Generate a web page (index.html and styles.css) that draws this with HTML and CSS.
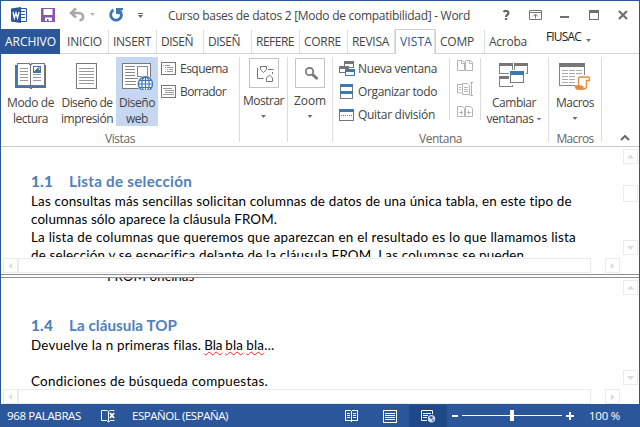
FILE: index.html
```html
<!DOCTYPE html>
<html lang="es">
<head>
<meta charset="utf-8">
<title>Curso bases de datos 2 - Word</title>
<link rel="stylesheet" href="styles.css">
</head>
<body>
<div class="window">
  <header class="titlebar">
    <svg class="quick" width="150" height="28" viewBox="1 1 150 28">
      <path fill="#2b579a" d="M11 8.500L21 7v16l-10-1.500z"/>
      <path fill="none" stroke="#2b579a" d="M21 8.500h5.500v13H21M21 11.500h4M21 14.500h4M21 17.500h4"/>
      <path fill="none" stroke="#fff" stroke-width="1.300" d="M13 12l1.300 6 1.700-5 1.500 5 1.500-6"/>
      <path fill="#8558ab" fill-rule="evenodd" d="M41 8h14v14H41zM43.500 9v6h9V9zM45 17.500V21h2v-2h1.500v2H52v-3.500z"/>
      <path fill="none" stroke="#a9a9a9" stroke-width="2.600" d="M76 8.500l-5 4.500 5 4.500M72 13h6c6.500 0 6.500 6.500 1.500 7.500"/>
      <path fill="#b5b5b5" d="M90 13h5l-2.500 3z"/>
      <path fill="none" stroke="#3e76b4" stroke-width="2.800" d="M113.500 10a5.400 5.400 0 1 0 6.500 1"/>
      <path fill="#3e76b4" d="M116 8h7v2.200h-2.500l-.8 4.300-3.700-.7z"/>
      <path stroke="#666" d="M138 13.500h5"/><path fill="#666" d="M138 15h5l-2.500 3z"/>
    </svg>
    <span class="doc-title"><span data-fit="302">Curso bases de datos 2 [Modo de compatibilidad] - Word</span></span>
    <svg class="controls" width="139" height="28" viewBox="500 1 139 28">
      <path fill="none" stroke="#666" stroke-width="2.200" d="M504.500 12c1-1.500 5-1.500 5 1 0 2-2.500 1.500-2.500 4M507 18v2"/>
      <path fill="none" stroke="#777" d="M530.500 10.500h12v9h-12zM530 12.500h13M536.500 18.500v-4M534 16.500l2.500-2.500 2.500 2.500"/>
      <path fill="#707070" d="M561 16h9v2h-9z"/>
      <path fill="#707070" fill-rule="evenodd" d="M590 10h10v10h-10zM591 13v6h8v-6z"/>
      <path stroke="#707070" stroke-width="2.200" d="M620 11l8 8M628 11l-8 8"/>
    </svg>
  </header>

  <nav class="tabs">
    <span class="tab file"><span data-fit="51">ARCHIVO</span></span>
    <span class="tab"><span data-fit="35">INICIO</span></span>
    <span class="tab"><span data-fit="38">INSERT</span></span>
    <span class="tab"><span data-fit="32">DISEÑ</span></span>
    <span class="tab"><span data-fit="32">DISEÑ</span></span>
    <span class="tab"><span data-fit="38">REFERE</span></span>
    <span class="tab"><span data-fit="37">CORRE</span></span>
    <span class="tab"><span data-fit="37">REVISA</span></span>
    <span class="tab active"><span data-fit="32">VISTA</span></span>
    <span class="tab"><span data-fit="34">COMP</span></span>
    <span class="tab last"><span data-fit="38">Acroba</span></span>
    <span class="account"><span data-fit="35">FIUSAC</span><i class="arrow"></i></span>
  </nav>

  <section class="ribbon">
    <div class="group vistas">
      <div class="row">
        <div class="big modo">
          <svg width="32" height="28" viewBox="0 0 32 28" shape-rendering="crispEdges">
            <path fill="#3e78b3" d="M0 3h3v20h11l2 1 2-1h11V3h2v23H18l-2 1-2-1H0z"/>
            <path fill="#fff" stroke="#777" d="M2.500 1.500h11l2 1 2-1h12v22h-12l-2 1-2-1h-11zM15.500 2v22"/>
            <path stroke="#999" d="M5 6.500h8M5 9.500h8M5 12.500h8M5 15.500h8M5 18.500h8M18 12.500h8M18 15.500h8M18 18.500h8"/>
            <path fill="#3e78b3" d="M18 4h8v7h-8z"/><path fill="#fff" d="M19 5h6v2l-1 1-2-2-3 3z"/><path fill="#e7a13b" d="M23 5h2v2h-2z"/>
          </svg>
          <span data-fit="47">Modo de</span><span data-fit="35">lectura</span>
        </div>
        <div class="big impresion">
          <svg width="24" height="28" viewBox="0 0 24 28" shape-rendering="crispEdges">
            <path fill="#fff" stroke="#777" d="M1.500 1.500h20v25h-20z"/>
            <path stroke="#999" d="M4 6.500h15M4 9.500h15M4 12.500h15M4 15.500h15M4 18.500h15M4 21.500h15"/>
          </svg>
          <span data-fit="51">Diseño de</span><span data-fit="52">impresión</span>
        </div>
        <div class="big web">
          <svg width="32" height="28" viewBox="0 0 32 28">
            <path fill="#fff" stroke="#777" d="M1.500 1.500h28v25h-28z" shape-rendering="crispEdges"/>
            <path fill="none" stroke="#888" d="M4 4.500h10M4 7.500h10M4 10.500h10M4 13.500h10M4 16.500h13M4 19.500h11M4 22.500h11M16.500 4.500h10v10h-10z" shape-rendering="crispEdges"/>
            <circle cx="24.500" cy="22" r="8.500" fill="#c5d7f1"/>
            <circle cx="24.500" cy="22" r="7" fill="#fff" stroke="#3e78b3" stroke-width="1.300"/>
            <path fill="none" stroke="#3e78b3" stroke-width="1.200" d="M17.500 22h14M24.500 15v14M18.500 18.500h12M18.500 25.500h12"/>
            <ellipse cx="24.500" cy="22" rx="3.700" ry="7" fill="none" stroke="#3e78b3" stroke-width="1.200"/>
          </svg>
          <span data-fit="36">Diseño</span><span data-fit="22">web</span>
        </div>
        <div class="stack outline">
          <div class="small"><svg width="15" height="13" viewBox="0 0 15 13" shape-rendering="crispEdges"><path fill="#fff" stroke="#777" d="M.5.5h14v12H.5z"/><path stroke="#999" d="M2 3.500h1M4 3.500h5M4 5.500h1M6 5.500h6M6 7.500h1M8 7.500h4M4 9.500h1M6 9.500h6"/></svg><span data-fit="48">Esquema</span></div>
          <div class="small"><svg width="15" height="13" viewBox="0 0 15 13" shape-rendering="crispEdges"><path fill="#fff" stroke="#777" d="M.5.5h14v12H.5z"/><path stroke="#999" d="M2 3.500h9M4 5.500h9M4 7.500h9M2 9.500h11"/></svg><span data-fit="46">Borrador</span></div>
        </div>
      </div>
      <div class="caption"><span data-fit="30">Vistas</span></div>
    </div>

    <div class="group collapsed mostrar">
      <div class="tile"><svg width="28" height="28" viewBox="0 0 28 28"><path fill="none" stroke="#777" d="M7.500 9v10.500h6M10.500 7.500h6v3l-3 3-3-3zM18 10.500h5.500M22.500 15v-2M16.500 22.500v-3.500l3-3 3 3v3.500z"/></svg></div>
      <span data-fit="41">Mostrar</span><i class="arrow"></i>
    </div>
    <div class="group collapsed zoom">
      <div class="tile"><svg width="28" height="28" viewBox="0 0 28 28"><circle cx="13.500" cy="12.500" r="3.700" fill="none" stroke="#777" stroke-width="1.700"/><path stroke="#777" stroke-width="3" d="M16.500 15.500l5 4.500"/></svg></div>
      <span data-fit="32">Zoom</span><i class="arrow"></i>
    </div>

    <div class="group ventana">
      <div class="row">
        <div class="stack">
          <div class="small"><svg width="17" height="16" viewBox="0 0 17 16" shape-rendering="crispEdges"><path fill="#fff" stroke="#777" d="M5.500.5h9v6h-9zM.5 5.500h9v6h-9z"/><path fill="#777" d="M5 0h10v3H5zM0 5h10v3H0z"/><path fill="#fff" stroke="#3e78b3" d="M6.500 8.500h9v6h-9z"/><path fill="#3e78b3" d="M6 8h10v3H6z"/></svg><span data-fit="79">Nueva ventana</span></div>
          <div class="small"><svg width="17" height="16" viewBox="0 0 17 16" shape-rendering="crispEdges"><path fill="#fff" stroke="#777" d="M1.500.5h12v14h-12z"/><path fill="#3e78b3" d="M1 0h13v3H1zM1 7h13v3H1z"/></svg><span data-fit="79">Organizar todo</span></div>
          <div class="small"><svg width="17" height="16" viewBox="0 0 17 16" shape-rendering="crispEdges"><path fill="#fff" stroke="#777" d="M.5 2.500h14v11H.5z"/><path fill="#3e78b3" d="M0 2h15v3H0z"/><path stroke="#3e78b3" stroke-dasharray="1 1" d="M2 8.500h12"/></svg><span data-fit="77">Quitar división</span></div>
        </div>
        <div class="compare">
          <svg width="17" height="16" viewBox="0 0 17 16"><path fill="none" stroke="#b4b4b4" d="M.5 2.500h5l2 2v8h-7zM8.500 2.500h5l2 2v8h-7zM4.500 2.500v3h3M12.500 2.500v3h3"/></svg>
          <svg width="17" height="16" viewBox="0 0 17 16"><path fill="none" stroke="#b4b4b4" d="M5.500 2.500h5l2 2v9h-7zM7 6.500h4M7 8.500h4M7 10.500h4M.5 3v9h4M1 3.500h4M2 6.500h2M2 8.500h2M14.500 1v14M13 1.500h3M13 14.500h3"/></svg>
          <svg width="17" height="16" viewBox="0 0 17 16"><path fill="none" stroke="#b4b4b4" d="M.5 2.500h5l2 2v8h-7zM8.500 2.500h5l2 2v8h-7zM2 8.500h4M4.500 6.500v4M10 8.500h4M11.500 6.500v4"/></svg>
        </div>
        <div class="big cambiar">
          <svg width="30" height="28" viewBox="0 0 30 28" shape-rendering="crispEdges"><path fill="#fff" stroke="#858585" d="M.5 1.500h13v10H.5zM15.500 1.500h13v10h-13zM.5 14.500h13v10H.5z"/><path fill="#777" d="M0 1h14v3H0zM15 1h14v3H15zM0 14h14v3H0z"/><path fill="#fff" d="M10 8h17v15H10z"/><path fill="#fff" stroke="#777" d="M11.500 10.500h13v10h-13z"/><path fill="#3e78b3" d="M11 9h14v4H11z"/></svg>
          <span data-fit="44">Cambiar</span><span class="with-arrow"><span data-fit="47">ventanas</span><i class="arrow"></i></span>
        </div>
      </div>
      <div class="caption"><span data-fit="43">Ventana</span></div>
    </div>

    <div class="group macros">
      <div class="row">
        <div class="big">
          <svg width="32" height="28" viewBox="0 0 32 28"><g shape-rendering="crispEdges"><path fill="#fff" stroke="#858585" d="M.5 1.500h25v22H.5z"/><path fill="#777" d="M0 1h26v4H0z"/><path stroke="#aaa" stroke-dasharray="6 1" d="M3 8.500h20M3 11.500h20M3 14.500h20M3 17.500h20M3 20.500h20"/></g><path fill="#fff" d="M16 13h14v15H16z"/><path fill="#fff" stroke="#e8883a" stroke-width="1.300" d="M19.500 25V17q0-2 2-2h7q2 0 2 2v1.500h-3V24q0 3-3 3h-6q-2 0-2-3h6"/><path fill="#e8883a" d="M16.500 24h8v3.500h-6q-2-1-2-3.500z"/></svg>
          <span data-fit="38">Macros</span><i class="arrow"></i>
        </div>
      </div>
      <div class="caption"><span data-fit="37">Macros</span></div>
    </div>
    <svg class="collapse" width="10" height="6" viewBox="0 0 10 6"><path fill="none" stroke="#666" stroke-width="2" d="M1 5l4-4 4 4"/></svg>
  </section>

  <section class="pane top-pane">
    <div class="view">
      <article class="page">
        <h2><b data-fit="22">1.1</b><span data-fit="123">Lista de selección</span></h2>
        <p><span data-fit="541">Las consultas más sencillas solicitan columnas de datos de una única tabla, en este tipo de</span></p>
        <p><span data-fit="246">columnas sólo aparece la cláusula FROM.</span></p>
        <p><span data-fit="545">La lista de columnas que queremos que aparezcan en el resultado es lo que llamamos lista</span></p>
        <p><span data-fit="493">de selección y se especifica delante de la cláusula FROM. Las columnas se pueden</span></p>
      </article>
      <div class="hscroll"><i class="btn left"></i><i class="thumb"></i><i class="btn right"></i></div>
    </div>
    <div class="vscroll"><i class="btn up"></i><i class="thumb"></i><i class="btn down"></i></div>
  </section>
  <div class="splitter"></div>
  <section class="pane bottom-pane">
    <div class="view">
      <article class="page">
        <p class="indent"><span data-fit="87">FROM oficinas</span></p>
        <h2><b data-fit="22">1.4</b><span data-fit="108">La cláusula TOP</span></h2>
        <p><span data-fit="170">Devuelve la n primeras filas.</span><span class="words"><span class="typo" data-fit="18">Bla</span><span class="typo" data-fit="18">bla</span><span class="typo" data-fit="18">bla</span></span><span data-fit="10">…</span></p>
        <p class="spaced"><span data-fit="237">Condiciones de búsqueda compuestas.</span></p>
      </article>
      <div class="hscroll"><i class="btn left"></i><i class="thumb"></i><i class="btn right"></i></div>
    </div>
    <div class="vscroll"><i class="btn up"></i><i class="btn down"></i></div>
  </section>

  <footer class="status">
    <span class="count"><span data-fit="74">968 PALABRAS</span></span>
    <svg class="proof" width="16" height="14" viewBox="0 0 16 14"><path fill="none" stroke="#fff" d="M7.500 12.500V2.500q-1-1-2-1h-5v10h5l2 1.500 2-1.500h4M7.500 2.500q1-1 2-1h4"/><path stroke="#fff" stroke-width="1.800" d="M9 4l4 5M13 4L9 9"/></svg>
    <span class="lang"><span data-fit="96">ESPAÑOL (ESPAÑA)</span></span>
    <div class="views">
      <span class="view-btn"><svg width="14" height="14" viewBox="0 0 14 14" shape-rendering="crispEdges"><path fill="none" stroke="#fff" d="M.5 1.500h5l1 1 1-1h5v10h-5l-1 1-1-1h-5zM6.500 2v11M2 4.500h3M2 6.500h3M2 8.500h3M8 4.500h3M8 6.500h3M8 8.500h3"/></svg></span>
      <span class="view-btn"><svg width="14" height="14" viewBox="0 0 14 14" shape-rendering="crispEdges"><path fill="none" stroke="#fff" d="M.5 1.500h13v12H.5zM2 4.500h10M2 6.500h10M2 8.500h10M2 10.500h10"/></svg></span>
      <span class="view-btn selected"><svg width="15" height="14" viewBox="0 0 15 14"><path fill="none" stroke="#fff" d="M6 11.500H.5v-10h11V5M2 4.500h8M2 6.500h5M2 8.500h4"/><circle cx="10.500" cy="9.700" r="3.700" fill="#cfdcf0"/><path fill="#2b579a" d="M8 8l3-1 1 2-2 1zM11 11l2-1-1 3z"/></svg></span>
    </div>
    <svg class="slider" width="123" height="12" viewBox="0 0 123 12" shape-rendering="crispEdges"><path fill="#fff" d="M0 5h6v2H0zM10 5h100v1H10zM58 0h4v11h-4zM114 5h8v2h-8zM117 2h2v8h-2z"/></svg>
    <span class="percent"><span data-fit="31">100 %</span></span>
  </footer>
</div>
<script src="fit.js"></script>
</body>
</html>
```
FILE: styles.css
```css
* { box-sizing: border-box; }
body { margin: 0; background: #fff; }
body, .window { font: 12px/16px "Open Sans", "Noto Sans", sans-serif; color: #444; }
svg { display: block; flex: none; }
i { display: block; flex: none; }
[data-fit] { display: inline-block; white-space: pre; }
.window { width: 640px; height: 427px; border: 1px solid #2b579a; border-bottom: 0; display: flex; flex-direction: column; overflow: hidden; }

.titlebar { height: 28px; display: flex; flex: none; align-items: center; }
.doc-title { width: 348px; padding-left: 17px; padding-top: 2px; }

.tabs { height: 25px; flex: none; display: grid; grid-template-columns: 59px 49px 48px 47px 48px 48px 48px 47px 41px 49px 55px 1fr; }
.tab { padding: 5px 0 0 4px; border-bottom: 1px solid #d4d4d4; position: relative; }
.tab:nth-child(2) { padding-left: 7px; }
.tab:not(.file):not(.last)::after { content: ""; position: absolute; right: 0; top: 1px; bottom: 0; width: 1px; background: #dedede; }
.tab.file { background: #2b579a; color: #fff; padding-left: 4px; border: 0; }
.tab.active { color: #2b579a; border: 1px solid #d0d0d0; border-bottom: 0; padding-top: 4px; padding-left: 4px; }
.account { border-bottom: 1px solid #d4d4d4; display: flex; gap: 5px; color: #222; padding-left: 6px; }
.account .arrow { margin-top: 10px; }
.arrow { width: 5px; height: 3px; background: #707070; clip-path: polygon(0 0, 100% 0, 50% 100%); }

.ribbon { height: 93px; flex: none; border-bottom: 1px solid #c8c8c8; display: flex; padding-top: 3px; }
.group { height: 85px; border-right: 1px solid #dcdcdc; display: flex; flex-direction: column; flex: none; }
.row { height: 75px; flex: none; display: flex; }
.caption { flex: none; text-align: center; color: #666; line-height: 16px; margin-top: -1px; }
.vistas { width: 239px; }
.big { display: flex; flex-direction: column; align-items: center; height: 69px; padding-top: 5px; }
.big svg { margin-bottom: 5px; }
.big > .arrow { margin-top: 6px; }
.modo { width: 59px; }
.impresion { width: 56px; padding-right: 2px; }
.web { width: 42px; background: #c5d7f1; }
.stack { display: flex; flex-direction: column; }
.small { height: 23px; display: flex; align-items: center; }
.outline { padding-left: 3px; }
.outline .small { gap: 4px; }
.mostrar { width: 48px; }
.zoom { width: 45px; }
.collapsed { align-items: center; padding-top: 1px; }
.tile { border: 1px solid #c5c5c5; width: 30px; height: 30px; margin-bottom: 5px; }
.collapsed .arrow { margin-top: 6px; }
.ventana { width: 216px; }
.ventana .stack { width: 116px; padding-left: 6px; }
.ventana .small { gap: 2px; }
.compare { width: 32px; height: 62px; margin-top: 1px; border: solid #dcdcdc; border-width: 0 1px; padding-left: 7px; display: flex; flex-direction: column; gap: 7px; }
.cambiar { width: 66px; }
.with-arrow { display: flex; align-items: center; gap: 3px; }
.macros { width: 53px; }
.macros .big { width: 100%; }
.collapse { margin: 78px 0 0 18px; }

.pane { display: flex; flex: none; }
.top-pane { height: 127px; }
.bottom-pane { height: 126px; }
.view { width: 622px; display: flex; flex-direction: column; }
.page { height: 110px; overflow: hidden; padding-left: 30px; font: 13.4px/18px Lato, sans-serif; color: #000; }
.page p { margin: 0; height: 18px; display: flex; }
.page h2 { margin: 0; display: flex; font-size: 15.200px; line-height: 20px; padding-bottom: 1px; color: #4f81bd; }
.page h2 b { width: 38px; }
.top-pane h2 { padding-top: 24px; }
.bottom-pane h2 { padding-top: 30px; }
.bottom-pane .indent { margin-top: -11px; padding-left: 76px; }
.words { display: flex; gap: 3px; padding-left: 3px; }
.typo { text-decoration: underline wavy #f22 1px; text-underline-offset: 1px; }
.page .spaced { margin-top: 18px; }
.hscroll { height: 15px; margin: 1px 0 0 2px; display: flex; }
.btn, .thumb { border: 1px solid #ebebeb; }
.btn { width: 15px; height: 15px; display: grid; place-items: center; }
.btn::after { content: ""; width: 7px; height: 4px; background: #dcdcdc; clip-path: polygon(50% 0, 100% 100%, 0 100%); }
.btn.down::after { transform: rotate(180deg); }
.btn.left::after { transform: rotate(-90deg); }
.btn.right::after { transform: rotate(90deg); }
.hscroll .thumb { width: 573px; }
.hscroll .right { margin-left: 14px; }
.vscroll { display: flex; flex-direction: column; padding-top: 2px; width: 15px; }
.vscroll .thumb { height: 17px; margin: 21px 0 38px; }
.bottom-pane .vscroll .down { margin-top: 75px; }
.splitter { height: 4px; flex: none; border: solid #8a8f98; border-width: 1px 0; }

.status { height: 23px; flex: none; margin: 0 -1px; background: #2b579a; color: #fff; display: flex; align-items: center; font-size: 11.500px; }
.count { width: 101px; padding-left: 7px; }
.lang { width: 292px; padding-left: 15px; flex: 1; }
.views { display: flex; height: 22px; }
.view-btn { width: 38px; display: grid; place-items: center; }
.view-btn.selected { background: #1e4888; }
.slider { margin: 0 12px 0 5px; }
.percent { width: 53px; padding-left: 2px; }
```
FILE: fit.js
```js
// Tracks each label so that it fills the width it declares.
document.querySelectorAll("[data-fit]").forEach(function (label) {
  var range = document.createRange();
  range.selectNodeContents(label);
  var natural = range.getBoundingClientRect().width;
  var spacing = (Number(label.dataset.fit) - natural) / label.textContent.length;
  label.style.letterSpacing = spacing.toFixed(3) + "px";
});
```
